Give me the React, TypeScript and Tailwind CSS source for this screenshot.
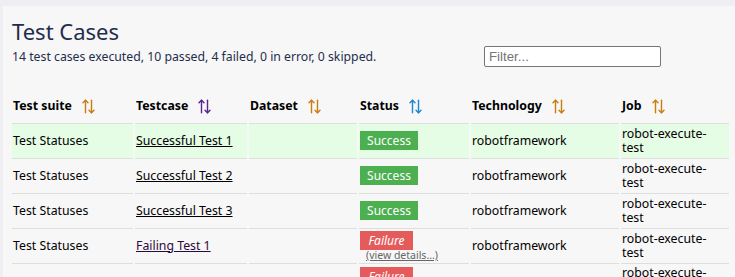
import React from 'react';

type Row = {
  suite: string;
  testcase: string;
  dataset: string;
  status: 'Success' | 'Failure';
  technology: string;
  job: string;
  visited?: boolean;
  tall?: boolean;
};

const rows: Row[] = [
  { suite: 'Test Statuses', testcase: 'Successful Test 1', dataset: '', status: 'Success', technology: 'robotframework', job: 'robot-execute-test' },
  { suite: 'Test Statuses', testcase: 'Successful Test 2', dataset: '', status: 'Success', technology: 'robotframework', job: 'robot-execute-test' },
  { suite: 'Test Statuses', testcase: 'Successful Test 3', dataset: '', status: 'Success', technology: 'robotframework', job: 'robot-execute-test' },
  { suite: 'Test Statuses', testcase: 'Failing Test 1', dataset: '', status: 'Failure', technology: 'robotframework', job: 'robot-execute-test', visited: true },
  { suite: 'Test Statuses', testcase: 'Failing Test 2', dataset: '', status: 'Failure', technology: 'robotframework', job: 'robot-execute-test', tall: true },
];

function SortIcon({ color }: { color: string }) {
  return (
    <svg width="13" height="15" viewBox="0 0 13 15" fill="none" stroke={color} strokeWidth="1.4" strokeLinecap="round" strokeLinejoin="round" className="inline-block align-middle">
      <path d="M3.5 1.2 V13.8" />
      <path d="M1 3.8 L3.5 1.2 L6 3.8" />
      <path d="M9.5 1.2 V13.8" />
      <path d="M7 11.2 L9.5 13.8 L12 11.2" />
    </svg>
  );
}

const headers = [
  { label: 'Test suite', w: 'w-[121px]', color: '#c97d10' },
  { label: 'Testcase', w: 'w-[112px]', color: '#5a2590' },
  { label: 'Dataset', w: 'w-[108px]', color: '#c97d10' },
  { label: 'Status', w: 'w-[110px]', color: '#1f86d0' },
  { label: 'Technology', w: 'w-[148px]', color: '#c97d10' },
  { label: 'Job', w: 'w-[108px]', color: '#c97d10' },
];

export default function App() {
  return (
    <div className="min-h-screen bg-[#efeef3] pt-[6px] pl-[3px] font-['Noto_Sans',sans-serif]">
      <div className="bg-[#f7f7f7] min-h-[271px] pl-[8px] pt-[11px] pb-4">
        <div className="pl-[1px] text-[#1f2d4d]">
          <h1 className="text-[22px] leading-[28px]">Test Cases</h1>
          <div className="flex items-center mt-[1px]">
            <p className="w-[472px] text-[12.25px] leading-[16px]">
              14 test cases executed, 10 passed, 4 failed, 0 in error, 0 skipped.
            </p>
            <input
              type="text"
              placeholder="Filter..."
              className="w-[177px] h-[21px] bg-white border border-[#767676] rounded-[2px] px-[4px] text-[13.3px] font-['Liberation_Sans',sans-serif] placeholder:text-[#757575] outline-none"
            />
          </div>
        </div>

        <table className="table-fixed border-separate border-spacing-x-[2px] border-spacing-y-0 w-[721px] -ml-[1px] mt-[22px] text-[12.3px] text-black">
          <thead>
            <tr>
              {headers.map((h) => (
                <th key={h.label} className={`${h.w} h-[35px] border-b border-[#dedede] pl-[1px] text-left align-middle font-bold`}>
                  <span className="align-middle">{h.label}</span>
                  <span className="ml-[10px]">
                    <SortIcon color={h.color} />
                  </span>
                </th>
              ))}
            </tr>
          </thead>
          <tbody>
            {rows.map((r, i) => {
              const bg = i === 0 ? 'bg-[#e5fce5]' : '';
              const h = r.tall ? 'h-[64px]' : 'h-[35px]';
              const td = `${bg} ${h} border-b border-[#dedede] pl-[1px] align-middle`;
              const tdTop = r.tall ? `${bg} ${h} border-b border-[#dedede] pl-[1px] align-top pt-[3px]` : td;
              return (
                <tr key={i}>
                  <td className={td}>{r.suite}</td>
                  <td className={td}>
                    <a href="#" className={`underline ${r.visited ? 'text-[#2b0a3d]' : 'text-black'}`}>
                      {r.testcase}
                    </a>
                  </td>
                  <td className={td}>{r.dataset}</td>
                  <td className={tdTop}>
                    {r.status === 'Success' ? (
                      <span className="inline-block bg-[#4caf50] text-white text-[12px] leading-[19px] px-[7px] w-[58px] text-center">
                        Success
                      </span>
                    ) : (
                      <div className="flex flex-col items-start">
                        <span className="inline-block bg-[#e55b5b] text-white italic text-[12px] leading-[19px] w-[53px] text-center">
                          Failure
                        </span>
                        <a href="#" className="ml-[6px] text-[10.5px] leading-[11px] text-[#666] underline">
                          (view details...)
                        </a>
                      </div>
                    )}
                  </td>
                  <td className={td}>{r.technology}</td>
                  <td className={r.tall ? `${bg} ${h} border-b border-[#dedede] pl-[1px] align-top pt-[2px]` : td}>
                    <div className="w-[88px] leading-[14px]">{r.job}</div>
                  </td>
                </tr>
              );
            })}
          </tbody>
        </table>
      </div>
    </div>
  );
}
